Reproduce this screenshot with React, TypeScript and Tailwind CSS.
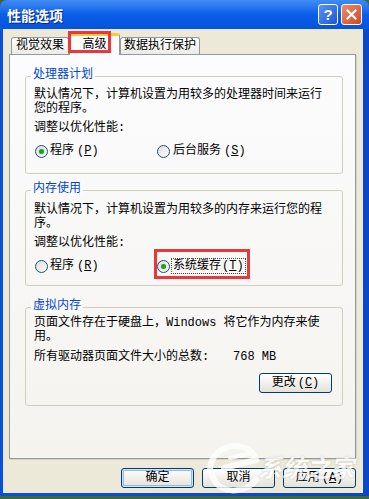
import React from 'react';

const Radio = ({ checked }: { checked?: boolean }) => (
  <span className="w-[13px] h-[13px] shrink-0 rounded-full border border-[#1c5180] bg-gradient-to-br from-[#dcdcd6] to-white flex items-center justify-center">
    {checked && <span className="w-[5px] h-[5px] rounded-full bg-[#21a121] shadow-[0_0_1px_#7fd17f]" />}
  </span>
);

const XpButton = ({ children, primary }: { children: React.ReactNode; primary?: boolean }) => (
  <button
    className={`w-[73px] h-[20px] rounded-[3px] border border-[#003c74] bg-gradient-to-b from-white to-[#e3e2da] text-[12px] leading-none text-black flex items-center justify-center ${
      primary ? 'shadow-[inset_0_0_0_1px_#cee7ff,inset_0_0_0_2px_#98b8ea]' : ''
    }`}
  >
    {children}
  </button>
);

const Group = ({ title, className, children }: { title: string; className: string; children: React.ReactNode }) => (
  <div className={`relative border border-[#d0d0bf] rounded-[3px] pl-[8px] ${className}`}>
    <span className="absolute -top-[9px] left-[5px] px-[2px] bg-[#fbfbfb] text-[#0046d5] leading-[14px]">{title}</span>
    {children}
  </div>
);

const Line = ({ children }: { children: React.ReactNode }) => (
  <div className="h-[14px] leading-[14px] whitespace-nowrap">{children}</div>
);

export default function App() {
  return (
    <div className="relative w-[369px] h-[499px] overflow-hidden bg-[#3d6b34] text-[12px] text-black font-['Liberation_Mono','Noto_Sans_CJK_SC',monospace]">
      <div className="h-[496px] flex flex-col rounded-t-[7px] overflow-hidden bg-[#0a4fd8]">
        {/* title bar */}
        <div className="h-[29px] shrink-0 flex items-center pl-[7px] pr-[7px] bg-gradient-to-b from-[#3f8cf3] via-[#0b5de8] to-[#0454dc]">
          <span className="text-white font-bold text-[14px] leading-none font-['Noto_Sans_CJK_SC',sans-serif] [text-shadow:1px_1px_0_#0a2a8a]">
            性能选项
          </span>
          <div className="ml-auto flex gap-[3px]">
            <div className="w-[20px] h-[21px] rounded-[3px] border border-white bg-gradient-to-br from-[#5b93f6] to-[#1d54d8] flex items-center justify-center text-white font-bold text-[15px] leading-none font-['Liberation_Sans',sans-serif]">
              ?
            </div>
            <div className="w-[21px] h-[21px] rounded-[3px] border border-white bg-gradient-to-br from-[#ec8a6c] to-[#d2461e] flex items-center justify-center">
              <svg width="11" height="11" viewBox="0 0 11 11">
                <path d="M1.5 1.5 L9.5 9.5 M9.5 1.5 L1.5 9.5" stroke="white" strokeWidth="2.2" strokeLinecap="square" />
              </svg>
            </div>
          </div>
        </div>

        {/* frame */}
        <div className="flex-1 flex flex-col pl-[3px] pr-[6px] pb-[3px] bg-gradient-to-r from-[#0b50dc] to-[#0a46c8]">
          <div className="flex-1 flex flex-col bg-[#ece9d8] pl-[6px] pr-[7px] pt-[4px]">
            {/* tabs */}
            <div className="relative h-[21px] flex items-end pl-[2px]">
              <div className="w-[58px] h-[17px] border border-b-0 border-[#919b9c] rounded-t-[3px] bg-gradient-to-b from-white to-[#ecebe5] flex items-center justify-center leading-none">
                视觉效果
              </div>
              <div className="relative z-10 w-[51px] h-[22px] -mb-px border-x border-t-[3px] border-x-[#919b9c] border-t-[#ffc83c] rounded-t-[3px] bg-[#fcfcfe] flex items-center justify-center leading-none pb-[2px]">
                高级
              </div>
              <div className="w-[80px] h-[17px] border border-b-0 border-[#919b9c] rounded-t-[3px] bg-gradient-to-b from-white to-[#ecebe5] flex items-center justify-center leading-none">
                数据执行保护
              </div>
              <div className="absolute z-20 left-[59px] -top-[2px] w-[43px] h-[22px] border-[3px] border-[#e8383c]" />
            </div>

            {/* panel */}
            <div className="h-[405px] flex flex-col border border-[#919b9c] bg-gradient-to-b from-[#fcfcfe] to-[#f4f3ee] shadow-[1px_1px_0_#d6d4c8] pl-[15px] pr-[12px] pt-[21px]">
              <Group title="处理器计划" className="pt-[11px] pb-[15px]">
                <Line>默认情况下，计算机设置为用较多的处理器时间来运行</Line>
                <Line>您的程序。</Line>
                <div className="mt-[5px]">
                  <Line>调整以优化性能:</Line>
                </div>
                <div className="mt-[9px] h-[14px] flex items-center pl-[1px]">
                  <div className="w-[122px] flex items-center gap-[2px]">
                    <Radio checked />
                    <span className="leading-[14px]">
                      程序<span className="ml-[3px]">(<span className="underline">P</span>)</span>
                    </span>
                  </div>
                  <div className="flex items-center gap-[3px]">
                    <Radio />
                    <span className="leading-[14px]">
                      后台服务<span className="ml-[3px]">(<span className="underline">S</span>)</span>
                    </span>
                  </div>
                </div>
              </Group>

              <Group title="内存使用" className="mt-[16px] pt-[12px] pb-[12px]">
                <Line>默认情况下，计算机设置为用较多的内存来运行您的程</Line>
                <Line>序。</Line>
                <div className="mt-[5px]">
                  <Line>调整以优化性能:</Line>
                </div>
                <div className="mt-[9px] h-[14px] flex items-center pl-[1px]">
                  <div className="w-[122px] flex items-center gap-[2px]">
                    <Radio />
                    <span className="leading-[14px]">
                      程序<span className="ml-[3px]">(<span className="underline">R</span>)</span>
                    </span>
                  </div>
                  <div className="relative flex items-center gap-[2px]">
                    <Radio checked />
                    <span className="leading-[14px] px-[1px] outline outline-1 outline-dotted outline-[#444]">
                      系统缓存<span className="ml-[1px]">(<span className="underline">T</span>)</span>
                    </span>
                    <div className="absolute -left-[3px] -top-[10px] w-[96px] h-[30px] border-[3px] border-[#e8383c]" />
                  </div>
                </div>
              </Group>

              <Group title="虚拟内存" className="mt-[21px] pt-[8px] pb-[12px]">
                <Line>页面文件存在于硬盘上，Windows 将它作为内存来使</Line>
                <Line>用。</Line>
                <div className="mt-[6px] h-[14px] flex items-center leading-[14px] whitespace-nowrap">
                  <span className="w-[199px]">所有驱动器页面文件大小的总数:</span>
                  <span>768 MB</span>
                </div>
                <div className="mt-[9px] flex justify-end pr-[10px]">
                  <XpButton>
                    更改<span className="ml-[2px]">(<span className="underline">C</span>)</span>
                  </XpButton>
                </div>
              </Group>
            </div>

            {/* bottom buttons */}
            <div className="mt-[9px] flex justify-end gap-[8px]">
              <XpButton primary>确定</XpButton>
              <XpButton>取消</XpButton>
              <XpButton>
                应用<span className="ml-[2px]">(<span className="underline">A</span>)</span>
              </XpButton>
            </div>
          </div>
        </div>
      </div>

      {/* watermark */}
      <div className="absolute left-[204px] top-[440px] flex items-center opacity-80 pointer-events-none">
        <svg width="56" height="54" viewBox="0 0 56 54">
          <path
            d="M6 30 C6 16 18 6 31 6 C42 6 50 12 52 20 L20 28 M8 34 C10 46 22 52 34 50 C42 49 48 45 52 40"
            stroke="white"
            strokeWidth="6"
            fill="none"
            strokeLinecap="round"
          />
          <path d="M26 18 L44 14" stroke="white" strokeWidth="4" strokeLinecap="round" />
        </svg>
        <span className="-ml-[2px] text-white italic font-bold text-[24px] leading-none font-['Noto_Sans_CJK_SC',sans-serif] [text-shadow:0_0_2px_rgba(0,0,0,0.25)]">
          系统之家
        </span>
      </div>
    </div>
  );
}
